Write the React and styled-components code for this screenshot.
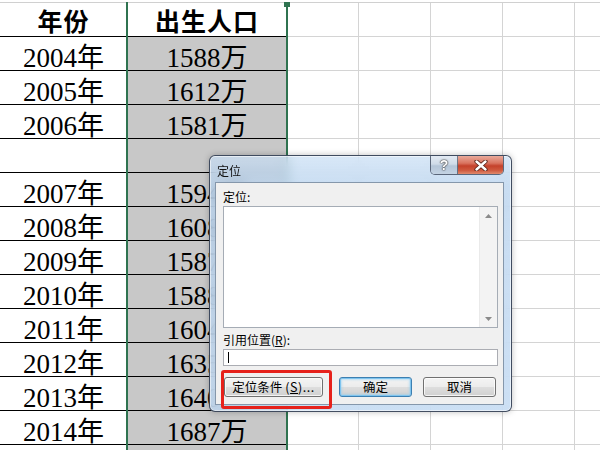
import React from 'react';
import styled, { createGlobalStyle } from 'styled-components';

const Global = createGlobalStyle`
  html, body { margin: 0; padding: 0; background: #fff; }
  body { width: 600px; height: 450px; overflow: hidden; }
`;

const Stage = styled.div`
  position: relative;
  width: 600px;
  height: 450px;
  overflow: hidden;
  background: #fff;
`;

const Sheet = styled.div`
  margin-top: 2px;
  border-top: 1px solid #d0d0d0;
  display: flex;
  flex-direction: column;
`;

const Row = styled.div`
  display: grid;
  grid-template-columns: 127px 160px repeat(5, 72px);
  height: 34px;
`;

const Cell = styled.div`
  box-sizing: border-box;
  display: flex;
  align-items: center;
  justify-content: center;
  padding-top: ${p => (p.$head ? '0' : '3px')};
  border-bottom: 1px solid ${p => (p.$table ? '#000' : '#d4d4d4')};
  border-right: ${p => (p.$table ? 'none' : '1px solid #d4d4d4')};
  background: ${p => (p.$shade ? '#c8c8c8' : '#fff')};
  font-family: "Liberation Serif", "Noto Sans CJK SC", serif;
  font-size: ${p => (p.$head ? '25px' : '27px')};
  font-weight: ${p => (p.$head ? 700 : 400)};
  letter-spacing: ${p => (p.$head ? '1px' : '0')};
  color: #000;
  white-space: nowrap;
  overflow: hidden;
`;

const Selection = styled.div`
  position: absolute;
  left: 126px;
  top: 2px;
  width: 162px;
  height: 470px;
  box-sizing: border-box;
  border-left: 2px solid #2f7350;
  border-right: 2px solid #2f7350;
  pointer-events: none;
`;

const Handle = styled.div`
  position: absolute;
  right: -4px;
  top: 0;
  width: 6px;
  height: 5px;
  background: #2f7350;
`;

const Dialog = styled.div`
  position: absolute;
  left: 209px;
  top: 155px;
  width: 303px;
  height: 257px;
  box-sizing: border-box;
  border: 1px solid rgba(30, 40, 60, 0.8);
  border-radius: 6px;
  background: linear-gradient(180deg, rgba(200, 222, 244, 0.7) 0%, rgba(185, 211, 238, 0.78) 12%, rgba(195, 218, 242, 0.85) 100%);
  backdrop-filter: blur(6px);
  box-shadow: inset 0 0 0 1px rgba(255, 255, 255, 0.55), 0 0 6px rgba(0, 0, 0, 0.25);
  display: flex;
  flex-direction: column;
  padding: 0 7px 6px 5px;
  font-family: "Noto Sans CJK SC", "Noto Sans", sans-serif;
  color: #000;
`;

const TitleBar = styled.div`
  height: 26px;
  display: flex;
  align-items: flex-start;
`;

const Title = styled.div`
  margin: 8px 0 0 2px;
  font-size: 12px;
  line-height: 14px;
  color: #111;
`;

const Caption = styled.div`
  margin-left: auto;
  margin-right: 0;
  display: flex;
  height: 18px;
  border: 1px solid rgba(40, 50, 70, 0.7);
  border-top: none;
  border-radius: 0 0 5px 5px;
  overflow: hidden;
`;

const HelpBtn = styled.div`
  width: 26px;
  height: 18px;
  display: flex;
  align-items: center;
  justify-content: center;
  background: linear-gradient(180deg, #e3eaf3 0%, #cfdbe8 45%, #b4c5d8 55%, #c4d3e3 100%);
  border-right: 1px solid rgba(40, 50, 70, 0.6);
  font-family: "Liberation Sans", sans-serif;
  font-weight: 700;
  font-size: 14px;
  color: #fff;
  text-shadow: 0 0 1px #333, 0 0 1px #333, 0 0 2px #555;
`;

const CloseBtn = styled.div`
  width: 45px;
  height: 18px;
  display: flex;
  align-items: center;
  justify-content: center;
  background: linear-gradient(180deg, #e9a99a 0%, #d9735f 40%, #c4412b 55%, #cf5a3f 80%, #e08a6c 100%);
`;

const Client = styled.div`
  flex: 1;
  border: 1px solid #8597ab;
  background: #f0f0f0;
  padding: 5px 5px 0 7px;
  display: flex;
  flex-direction: column;
`;

const Label = styled.div`
  font-size: 12px;
  line-height: ${p => p.$lh || 17}px;
  margin-top: ${p => p.$mt || 0}px;
  color: #000;
  white-space: nowrap;
`;

const ListBox = styled.div`
  margin-top: 1px;
  height: 122px;
  box-sizing: border-box;
  border: 1px solid #a5acb5;
  background: #fff;
  display: flex;
  justify-content: flex-end;
`;

const ScrollBar = styled.div`
  width: 17px;
  background: #f3f3f3;
  border-left: 1px solid #eaeaea;
  display: flex;
  flex-direction: column;
  justify-content: space-between;
  align-items: center;
  padding: 7px 0 6px;
`;

const Input = styled.div`
  margin-top: 1px;
  height: 17px;
  box-sizing: border-box;
  border: 1px solid #abadb3;
  background: #fff;
  display: flex;
  align-items: center;
  padding-left: 4px;
`;

const Caret = styled.div`
  width: 1px;
  height: 11px;
  background: #000;
`;

const ButtonRow = styled.div`
  margin-top: 11px;
  display: flex;
  padding-left: 1px;
`;

const Button = styled.div`
  width: ${p => p.$w}px;
  margin-left: ${p => p.$ml || 0}px;
  height: 20px;
  box-sizing: border-box;
  border: 1px solid ${p => (p.$default ? '#3c7fb1' : '#707070')};
  border-radius: 3px;
  background: linear-gradient(180deg, #f4f4f4 0%, #ececec 48%, #dddddd 52%, #d0d0d0 100%);
  box-shadow: ${p => (p.$default ? 'inset 0 0 0 1px #7fc4ee, inset 0 0 2px 2px rgba(140, 205, 245, 0.5)' : 'inset 0 0 0 1px rgba(255,255,255,0.75)')};
  display: flex;
  align-items: center;
  justify-content: center;
  font-size: 12.5px;
  line-height: 14px;
  color: #000;
  white-space: nowrap;
`;

const Mnemonic = styled.span`
  margin-left: 3px;
  letter-spacing: 0.5px;
`;

const Highlight = styled.div`
  position: absolute;
  left: 221px;
  top: 370px;
  width: 111px;
  height: 39px;
  box-sizing: border-box;
  border: 3px solid #e6211b;
  border-radius: 3px;
  pointer-events: none;
`;

const rows = [
  ['2004年', '1588万'],
  ['2005年', '1612万'],
  ['2006年', '1581万'],
  ['', ''],
  ['2007年', '1594万'],
  ['2008年', '1608万'],
  ['2009年', '1587万'],
  ['2010年', '1588万'],
  ['2011年', '1604万'],
  ['2012年', '1635万'],
  ['2013年', '1640万'],
  ['2014年', '1687万'],
  ['', ''],
];

const Blanks = () =>
  [0, 1, 2, 3, 4].map(i => <Cell key={i} />);

const Arrow = ({ up }) => (
  <svg width="7" height="4" viewBox="0 0 7 4">
    <path d={up ? 'M0 4 L3.5 0 L7 4 Z' : 'M0 0 L3.5 4 L7 0 Z'} fill="#8a8a8a" />
  </svg>
);

export default function App() {
  return (
    <Stage>
      <Global />
      <Sheet>
        <Row>
          <Cell $table $head>年份</Cell>
          <Cell $table $head>出生人口</Cell>
          <Blanks />
        </Row>
        {rows.map((r, i) => (
          <Row key={i}>
            <Cell $table>{r[0]}</Cell>
            <Cell $table $shade>{r[1]}</Cell>
            <Blanks />
          </Row>
        ))}
      </Sheet>
      <Selection>
        <Handle />
      </Selection>

      <Dialog>
        <TitleBar>
          <Title>定位</Title>
          <Caption>
            <HelpBtn>?</HelpBtn>
            <CloseBtn>
              <svg width="14" height="11" viewBox="0 0 14 11">
                <path d="M2.5 1.5 L11.5 9.5 M11.5 1.5 L2.5 9.5" stroke="#5a2318" strokeWidth="4.2" strokeLinecap="round" />
                <path d="M2.5 1.5 L11.5 9.5 M11.5 1.5 L2.5 9.5" stroke="#fff" strokeWidth="2.4" strokeLinecap="round" />
              </svg>
            </CloseBtn>
          </Caption>
        </TitleBar>
        <Client>
          <Label>定位:</Label>
          <ListBox>
            <ScrollBar>
              <Arrow up />
              <Arrow />
            </ScrollBar>
          </ListBox>
          <Label $mt={4} $lh={16}>
            引用位置(<u>R</u>):
          </Label>
          <Input>
            <Caret />
          </Input>
          <ButtonRow>
            <Button $w={99}>
              定位条件<Mnemonic>(<u>S</u>)...</Mnemonic>
            </Button>
            <Button $w={73} $ml={16} $default>确定</Button>
            <Button $w={73} $ml={11}>取消</Button>
          </ButtonRow>
        </Client>
      </Dialog>
      <Highlight />
    </Stage>
  );
}
